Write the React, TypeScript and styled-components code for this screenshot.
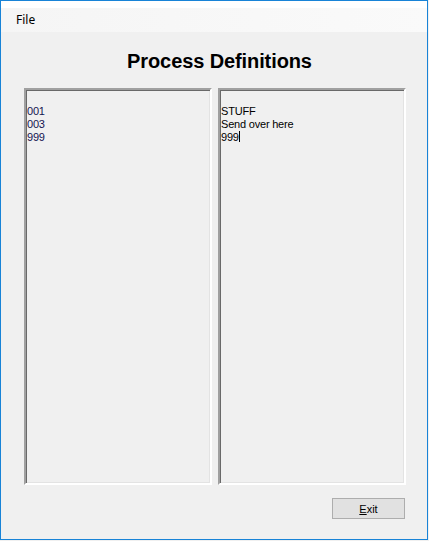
import React from "react";
import styled, { createGlobalStyle } from "styled-components";

const Global = createGlobalStyle`
  html, body { margin: 0; padding: 0; background: #f0f0f0; }
  body { font-family: "Liberation Sans", Arial, sans-serif; }
`;

const Window = styled.div`
  box-sizing: border-box;
  width: 428px;
  height: 540px;
  border: 1px solid #1883d7;
  background: #f0f0f0;
  display: flex;
  flex-direction: column;
`;

const TopStrip = styled.div`
  height: 7px;
  background: #ffffff;
`;

const MenuBar = styled.div`
  height: 24px;
  background: linear-gradient(to right, #f5f5f5, #fafafa);
  display: flex;
  align-items: center;
  padding-left: 15px;
`;

const MenuItem = styled.span`
  font-family: "Segoe UI", "Noto Sans", "Open Sans", sans-serif;
  font-size: 12px;
  color: #000;
  margin-top: -2px;
`;

const Body = styled.div`
  flex: 1;
  display: flex;
  flex-direction: column;
  padding: 0 21px 0 23px;
`;

const Title = styled.h1`
  margin: 0;
  height: 56px;
  box-sizing: border-box;
  padding: 18px 0 0 9px;
  text-align: center;
  font-family: "Liberation Sans", Arial, sans-serif;
  font-weight: bold;
  font-size: 20px;
  line-height: 23px;
  letter-spacing: -0.1px;
  color: #000;
`;

const Panes = styled.div`
  display: grid;
  grid-template-columns: 188px 188px;
  column-gap: 6px;
  height: 397px;
`;

const Pane = styled.div<{ $ink: string }>`
  box-sizing: border-box;
  border-style: solid;
  border-width: 2px;
  border-color: #a0a0a0 #ffffff #ffffff #a0a0a0;
  box-shadow: inset 1px 1px 0 #696969, inset -1px -1px 0 #e3e3e3;
  padding: 15px 0 0 1px;
  font-family: "Liberation Sans", Arial, sans-serif;
  font-size: 11px;
  line-height: 13px;
  letter-spacing: -0.2px;
  color: ${(p) => p.$ink};
  white-space: pre;
`;

const Line = styled.div``;

const Caret = styled.span`
  display: inline-block;
  width: 1px;
  height: 11px;
  background: #000;
  vertical-align: -1px;
`;

const Footer = styled.div`
  display: flex;
  justify-content: flex-end;
  padding-top: 13px;
  padding-right: 1px;
`;

const Button = styled.button`
  box-sizing: border-box;
  width: 73px;
  height: 21px;
  border: 1px solid #adadad;
  background: #e1e1e1;
  font-family: "Liberation Sans", Arial, sans-serif;
  font-size: 11px;
  color: #000;
  padding: 0;
  cursor: default;
`;

const Mnemonic = styled.span`
  text-decoration: underline;
`;

export default function App() {
  return (
    <>
      <Global />
      <Window>
        <TopStrip />
        <MenuBar>
          <MenuItem>File</MenuItem>
        </MenuBar>
        <Body>
          <Title>Process Definitions</Title>
          <Panes>
            <Pane $ink="#141450">
              <Line>001</Line>
              <Line>003</Line>
              <Line>999</Line>
            </Pane>
            <Pane $ink="#000000">
              <Line>STUFF</Line>
              <Line>Send over here</Line>
              <Line>
                999
                <Caret />
              </Line>
            </Pane>
          </Panes>
          <Footer>
            <Button>
              <Mnemonic>E</Mnemonic>xit
            </Button>
          </Footer>
        </Body>
      </Window>
    </>
  );
}
